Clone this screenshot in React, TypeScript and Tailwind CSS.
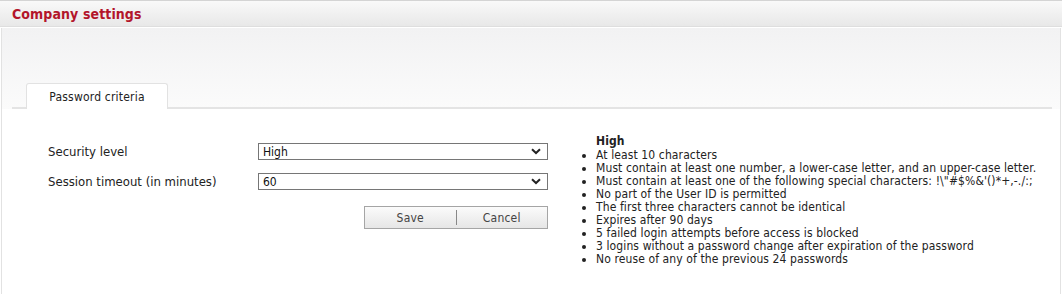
import React from "react";

const font = "font-['DejaVu_Sans_Condensed','DejaVu_Sans',sans-serif]";

function Chevron() {
  return (
    <svg width="10" height="7" viewBox="0 0 10 7" className="shrink-0">
      <path d="M1 1.2 L5 5 L9 1.2" fill="none" stroke="#222" strokeWidth="2" />
    </svg>
  );
}

function FakeSelect({ value }: { value: string }) {
  return (
    <div className="w-[290px] h-[17px] border border-[#767676] bg-white flex items-center justify-between pl-[4px] pr-[6px] text-[12px] text-[#111] leading-none">
      <span>{value}</span>
      <Chevron />
    </div>
  );
}

const criteria = [
  "At least 10 characters",
  "Must contain at least one number, a lower-case letter, and an upper-case letter.",
  "Must contain at least one of the following special characters: !\\\"#$%&'()*+,-./:;",
  "No part of the User ID is permitted",
  "The first three characters cannot be identical",
  "Expires after 90 days",
  "5 failed login attempts before access is blocked",
  "3 logins without a password change after expiration of the password",
  "No reuse of any of the previous 24 passwords",
];

export default function App() {
  return (
    <div className={`w-[1062px] h-[294px] bg-white flex flex-col text-[#333] ${font}`}>
      <div className="h-[27px] shrink-0 border-t border-b border-t-[#d4d4d4] border-b-[#dedede] bg-gradient-to-b from-[#f9f9f9] to-[#e8e8e8] flex items-center pl-[12px]">
        <span className="text-[#b3152a] font-bold text-[14px] leading-none tracking-[0.1px]">Company settings</span>
      </div>
      <div className="flex-1 ml-[1px] mr-[1px] mt-[1px] border-x border-[#e2e2e2] flex flex-col bg-white">
        <div className="h-[81px] shrink-0 bg-gradient-to-b from-[#f2f2f3] to-[#fbfbfb] flex flex-col justify-end">
          <div className="ml-[10px] mr-[8px] border-b-2 border-[#e4e4e4] flex pl-[14px]">
            <div className="w-[142px] h-[26px] -mb-[2px] bg-white border border-b-0 border-[#e2e2e2] rounded-t-[3px] flex items-center justify-center text-[12px] text-[#222] tracking-[0.2px]">
              Password criteria
            </div>
          </div>
        </div>
        <div className="flex-1 flex">
          <div className="w-[560px] shrink-0 pt-[34px] pl-[46px] flex flex-col">
            <div className="flex items-center h-[17px]">
              <span className="w-[210px] text-[13px] text-[#222]">Security level</span>
              <FakeSelect value="High" />
            </div>
            <div className="flex items-center h-[17px] mt-[13px]">
              <span className="w-[210px] text-[13px] text-[#222]">Session timeout (in minutes)</span>
              <FakeSelect value="60" />
            </div>
            <div className="flex mt-[16px] pl-[316px]">
              <div className="w-[184px] h-[23px] border border-[#a5a5a5] bg-gradient-to-b from-[#fbfbfb] to-[#e6e6e6] flex items-center text-[12px] text-[#444] tracking-[0.2px]">
                <span className="flex-1 text-center">Save</span>
                <span className="w-px h-[15px] bg-[#888]" />
                <span className="flex-1 text-center">Cancel</span>
              </div>
            </div>
          </div>
          <div className="pt-[26px] pl-[19px] text-[12px] text-[#222] leading-[13px] tracking-[0.11px]">
            <div className="font-bold pl-[15px] mb-[1px]">High</div>
            <ul className="list-disc pl-[15px]">
              {criteria.map((c) => (
                <li key={c}>{c}</li>
              ))}
            </ul>
          </div>
        </div>
      </div>
    </div>
  );
}
